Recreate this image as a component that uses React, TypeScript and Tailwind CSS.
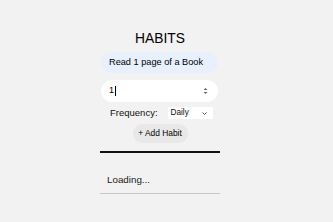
import React from 'react'

export default function App() {
  return (
    <div className="min-h-screen w-full bg-[#f2f2f2] font-['Liberation_Sans',Arial,sans-serif] text-black">
      <div className="w-[120px] ml-[100px] pt-[31px] flex flex-col">
        <h1 className="text-center text-[13.8px] leading-[16px] font-normal text-black">HABITS</h1>
        <div className="mt-[5px] ml-[1px] w-[117px] h-[21px] rounded-full bg-[#e8f0fe] pl-[8px] flex items-center text-[9.2px] text-black">
          Read 1 page of a Book
        </div>
        <div className="mt-[7px] ml-[1px] w-[117px] h-[22px] rounded-full bg-white flex items-center pl-[8px] pr-[10px] text-[9px]">
          <span>1</span>
          <span className="w-px h-[10px] bg-black ml-[1px]" />
          <span className="flex-1" />
          <svg width="5" height="8" viewBox="0 0 5 8">
            <path d="M0.5 3 L2.5 1 L4.5 3 Z" fill="#666" />
            <path d="M0.5 5 L2.5 7 L4.5 5 Z" fill="#666" />
          </svg>
        </div>
        <div className="mt-[5px] ml-[10px] flex items-center gap-[10px]">
          <span className="text-[9.5px] leading-[12px] text-[#111]">Frequency:</span>
          <div className="bg-white w-[45px] h-[12px] flex items-center pl-[3px] pr-[6px] text-[8.2px] text-[#111]">
            <span>Daily</span>
            <span className="flex-1" />
            <svg width="5" height="3" viewBox="0 0 5 3">
              <path d="M0.5 0.5 L2.5 2.5 L4.5 0.5" stroke="#444" strokeWidth="0.9" fill="none" />
            </svg>
          </div>
        </div>
        <button className="mt-[5px] self-center h-[19px] w-[55px] rounded-full bg-[#e8e8e8] text-[8.4px] text-black flex items-center justify-center">
          + Add Habit
        </button>
        <div className="mt-[8px] w-[120px] h-[2px] bg-[#111]" />
        <div className="mt-[21px] pl-[7px] text-[9.8px] leading-[12px] text-[#222]">Loading...</div>
        <div className="mt-[7px] w-[120px] h-px bg-[#c8c8c8]" />
      </div>
    </div>
  )
}
